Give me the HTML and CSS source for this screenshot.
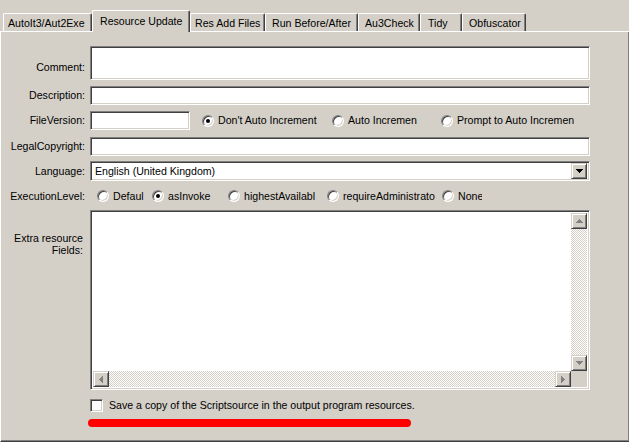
FILE: index.html
```html
<!DOCTYPE html>
<html>
<head>
<meta charset="utf-8">
<link rel="stylesheet" href="styles.css">
</head>
<body>
<div class="window">
  <div class="tabs">
    <div class="tab t1">AutoIt3/Aut2Exe</div>
    <div class="tab active t2">Resource Update</div>
    <div class="tab t3">Res Add Files</div>
    <div class="tab t4">Run Before/After</div>
    <div class="tab t5">Au3Check</div>
    <div class="tab t6">Tidy</div>
    <div class="tab t7">Obfuscator</div>
  </div>
  <div class="panel">
    <div class="row r-comment">
      <div class="lbl lbl-top">Comment:</div>
      <div class="edit wide h34"></div>
    </div>
    <div class="row r-desc">
      <div class="lbl">Description:</div>
      <div class="edit wide h19"></div>
    </div>
    <div class="row r-ver">
      <div class="lbl">FileVersion:</div>
      <div class="edit ver h19"></div>
      <div class="opts opts-ver">
        <div class="opt w130"><span class="radio on"></span><span class="opt-text">Don't Auto Increment</span></div>
        <div class="opt w109"><span class="radio"></span><span class="opt-text">Auto Incremen</span></div>
        <div class="opt w140"><span class="radio"></span><span class="opt-text">Prompt to Auto Incremen</span></div>
      </div>
    </div>
    <div class="row r-legal">
      <div class="lbl">LegalCopyright:</div>
      <div class="edit wide h19"></div>
    </div>
    <div class="row r-lang">
      <div class="lbl">Language:</div>
      <div class="combo">
        <span class="combo-text">English (United Kingdom)</span>
        <span class="btn combo-btn">
          <svg width="7" height="4" viewBox="0 0 7 4" shape-rendering="crispEdges"><path d="M0 0h7v1h-7zM1 1h5v1h-5zM2 2h3v1h-3zM3 3h1v1h-1z" fill="#000"/></svg>
        </span>
      </div>
    </div>
    <div class="row r-exec">
      <div class="lbl">ExecutionLevel:</div>
      <div class="opts opts-exec">
        <div class="opt w55"><span class="radio"></span><span class="opt-text">Defaul</span></div>
        <div class="opt w76"><span class="radio on"></span><span class="opt-text">asInvoke</span></div>
        <div class="opt w99"><span class="radio"></span><span class="opt-text">highestAvailable</span></div>
        <div class="opt w115"><span class="radio"></span><span class="opt-text">requireAdministrato</span></div>
        <div class="opt w40"><span class="radio"></span><span class="opt-text">None</span></div>
      </div>
    </div>
    <div class="row r-extra">
      <div class="lbl lbl-extra">Extra resource<br>Fields:</div>
      <div class="memo">
        <div class="memo-body"></div>
        <div class="vscroll">
          <span class="btn sbtn">
            <svg width="7" height="4" viewBox="0 0 7 4" shape-rendering="crispEdges"><path d="M3 0h1v1h-1zM2 1h3v1h-3zM1 2h5v1h-5zM0 3h7v1h-7z" fill="#808080"/></svg>
          </span>
          <span class="track"></span>
          <span class="btn sbtn">
            <svg width="7" height="4" viewBox="0 0 7 4" shape-rendering="crispEdges"><path d="M0 0h7v1h-7zM1 1h5v1h-5zM2 2h3v1h-3zM3 3h1v1h-1z" fill="#808080"/></svg>
          </span>
        </div>
        <div class="hscroll">
          <span class="btn sbtn">
            <svg width="4" height="7" viewBox="0 0 4 7" shape-rendering="crispEdges"><path d="M3 0h1v7h-1zM2 1h1v5h-1zM1 2h1v3h-1zM0 3h1v1h-1z" fill="#808080"/></svg>
          </span>
          <span class="track"></span>
          <span class="btn sbtn">
            <svg width="4" height="7" viewBox="0 0 4 7" shape-rendering="crispEdges"><path d="M0 0h1v7h-1zM1 1h1v5h-1zM2 2h1v3h-1zM3 3h1v1h-1z" fill="#808080"/></svg>
          </span>
        </div>
        <div class="corner"></div>
      </div>
    </div>
    <div class="row r-check">
      <span class="checkbox"></span>
      <span class="check-text">Save a copy of the Scriptsource in the output program resources.</span>
    </div>
    <div class="redline"></div>
  </div>
</div>
</body>
</html>
```

FILE: styles.css
```css
html, body {
  margin: 0;
  padding: 0;
  background: #d4d0c8;
  overflow: hidden;
}

body {
  width: 629px;
  height: 442px;
  font-family: "Liberation Sans", Arial, sans-serif;
  font-size: 10.6px;
  color: #000;
}

.window {
  width: 630px;
  height: 442px;
}

/* ---------- tabs ---------- */
.tabs {
  display: flex;
  align-items: flex-end;
  height: 31px;
  padding-left: 3px;
  position: relative;
  z-index: 2;
}

.tab {
  box-sizing: border-box;
  height: 18px;
  line-height: 18px;
  padding-left: 5px;
  white-space: nowrap;
  overflow: hidden;
  background: #d4d0c8;
  border-top: 1px solid #fff;
  border-left: 1px solid #fff;
  border-right: 1px solid #404040;
  box-shadow: inset -1px 0 #808080;
  border-radius: 2px 2px 0 0;
}

.tab.active {
  height: 22px;
  line-height: 18px;
  padding-top: 1px;
  margin-bottom: -1px;
  padding-left: 7px;
  position: relative;
  z-index: 3;
}

.t1 { width: 89px; padding-left: 4px; }
.t2 { width: 98px; }
.t3 { width: 75px; padding-left: 4px; }
.t4 { width: 93px; padding-left: 6px; }
.t5 { width: 62px; padding-left: 6px; }
.t6 { width: 42px; padding-left: 7px; }
.t7 { width: 64px; padding-left: 6px; }

/* ---------- panel ---------- */
.panel {
  box-sizing: border-box;
  height: 411px;
  border-top: 1px solid #fff;
  border-left: 1px solid #fff;
  border-right: 1px solid #404040;
  border-bottom: 1px solid #404040;
  box-shadow: inset -1px -1px #808080;
  padding-top: 14px;
  display: flex;
  flex-direction: column;
}

.row {
  display: flex;
  align-items: center;
}

.r-comment { margin-bottom: 6px; align-items: flex-start; }
.r-desc { margin-bottom: 6px; }
.r-ver { margin-bottom: 7px; }
.r-legal { margin-bottom: 5px; }
.r-lang { margin-bottom: 5px; height: 20px; }
.r-exec { margin-bottom: 4px; height: 20px; }
.r-extra { margin-bottom: 9px; align-items: flex-start; }
.r-check { margin-bottom: 7px; padding-left: 89px; height: 13px; }

.lbl {
  box-sizing: border-box;
  width: 84px;
  margin-right: 5px;
  text-align: right;
  line-height: 13px;
  white-space: nowrap;
}

.lbl-top { margin-top: 15px; }

.lbl-extra {
  padding-right: 2px;
  margin-top: 22px;
  line-height: 12px;
}

/* sunken edit */
.edit, .combo, .memo {
  box-sizing: border-box;
  background: #fff;
  border: 1px solid;
  border-color: #808080 #fff #fff #808080;
  box-shadow: inset 1px 1px #404040, inset -1px -1px #d4d0c8;
}

.wide { width: 500px; }
.ver { width: 100px; }
.h34 { height: 34px; }
.h19 { height: 19px; }

/* radio options */
.opts {
  display: flex;
  align-items: center;
}

.opts-ver { margin-left: 12px; }
.opts-exec { margin-left: 7px; }

.opt {
  display: flex;
  align-items: center;
  gap: 4px;
  overflow: hidden;
  white-space: nowrap;
  flex: none;
}

.w130 { width: 130px; }
.w109 { width: 109px; }
.w140 { width: 140px; }
.w55 { width: 55px; }
.w76 { width: 76px; }
.w99 { width: 87px; margin-right: 12px; }
.w115 { width: 115px; }
.w40 { width: 40px; }

.opt-text { line-height: 13px; }

.radio {
  box-sizing: border-box;
  flex: none;
  width: 12px;
  height: 12px;
  border-radius: 50%;
  background: #fff;
  border: 1px solid;
  border-color: #808080 #fff #fff #808080;
  box-shadow: inset 1px 1px #404040, inset -1px -1px #d4d0c8;
  position: relative;
}

.radio.on::after {
  content: "";
  position: absolute;
  left: 3px;
  top: 3px;
  width: 4px;
  height: 4px;
  border-radius: 50%;
  background: #000;
}

/* combo */
.combo {
  width: 500px;
  height: 20px;
  display: flex;
  align-items: center;
  justify-content: space-between;
  padding: 2px 2px 2px 4px;
}

.combo-text { line-height: 13px; }

.btn {
  box-sizing: border-box;
  display: flex;
  align-items: center;
  justify-content: center;
  background: #d4d0c8;
  border: 1px solid;
  border-color: #d4d0c8 #404040 #404040 #d4d0c8;
  box-shadow: inset 1px 1px #fff, inset -1px -1px #808080;
}

.combo-btn {
  width: 16px;
  height: 16px;
}

/* memo */
.memo {
  width: 500px;
  height: 180px;
  padding: 2px;
  display: grid;
  grid-template-columns: 1fr 16px;
  grid-template-rows: 1fr 16px;
}

.memo-body { background: #fff; }

.vscroll {
  display: flex;
  flex-direction: column;
}

.hscroll {
  display: flex;
}

.sbtn {
  width: 16px;
  height: 16px;
  flex: none;
}

.track {
  flex: 1;
  background: repeating-conic-gradient(#fff 0 25%, #d4d0c8 0 50%) 0 0 / 2px 2px;
}

.corner { background: #d4d0c8; }

/* checkbox */
.checkbox {
  box-sizing: border-box;
  width: 13px;
  height: 13px;
  background: #fff;
  border: 1px solid;
  border-color: #808080 #fff #fff #808080;
  box-shadow: inset 1px 1px #404040, inset -1px -1px #d4d0c8;
  flex: none;
}

.check-text {
  margin-left: 6px;
  line-height: 13px;
  white-space: nowrap;
}

.redline {
  margin-left: 87px;
  width: 323px;
  height: 8px;
  border-radius: 4px;
  background: #ff0000;
}
```
